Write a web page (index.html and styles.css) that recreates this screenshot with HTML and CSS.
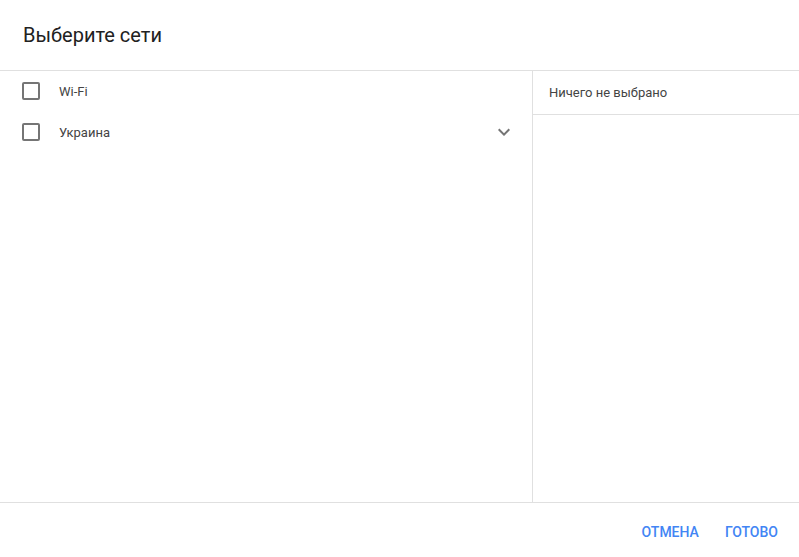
FILE: index.html
```html
<!DOCTYPE html>
<html lang="ru">
<head>
  <meta charset="UTF-8" />
  <title>Выберите сети</title>
  <link rel="stylesheet" href="styles.css">
</head>
<body>
  <div class="dialog">
    <header class="dialog-title">Выберите сети</header>
    <div class="dialog-body">
      <div class="tree">
        <label class="tree-row">
          <span class="check"></span>
          <span class="row-label">Wi-Fi</span>
        </label>
        <label class="tree-row">
          <span class="check"></span>
          <span class="row-label">Украина</span>
          <svg class="chevron" width="24" height="24" viewBox="0 0 24 24">
            <path d="M7.41 8.59L12 13.17l4.59-4.58L18 10l-6 6-6-6 1.41-1.41z" fill="#757575"/>
          </svg>
        </label>
      </div>
      <div class="selected">
        <div class="selected-head">Ничего не выбрано</div>
      </div>
    </div>
    <footer class="dialog-actions">
      <button class="btn">Отмена</button>
      <button class="btn">Готово</button>
    </footer>
  </div>
</body>
</html>
```

FILE: styles.css
```css
body {
  margin: 0;
  font-family: Roboto, "Liberation Sans", sans-serif;
  background-color: #fff;
  color: #212121;
}
.dialog {
  display: flex;
  flex-direction: column;
  height: 557px;
}
.dialog-title {
  height: 70px;
  padding: 0 23px;
  display: flex;
  align-items: center;
  font-size: 20px;
  border-bottom: 1px solid #e0e0e0;
}
.dialog-body {
  flex: 1;
  display: flex;
  border-bottom: 1px solid #e0e0e0;
}
.tree {
  width: 532px;
  border-right: 1px solid #e0e0e0;
}
.tree-row {
  height: 40px;
  display: flex;
  align-items: center;
  padding: 0 20px 1px 22px;
  font-size: 13px;
  color: #444;
}
.check {
  width: 14px;
  height: 14px;
  border: 2px solid #757575;
  border-radius: 2px;
  margin-right: 19px;
}
.row-label {
  flex: 1;
}
.chevron {
  margin-right: -4px;
}
.selected {
  flex: 1;
}
.selected-head {
  height: 43px;
  padding: 0 16px;
  display: flex;
  align-items: center;
  font-size: 13px;
  color: #444;
  border-bottom: 1px solid #e0e0e0;
}
.dialog-actions {
  height: 54px;
  display: flex;
  justify-content: flex-end;
  align-items: center;
  gap: 10px;
  padding: 4px 13px 0 0;
  box-sizing: border-box;
}
.btn {
  background: none;
  border: none;
  padding: 0 8px;
  height: 36px;
  font-family: Roboto, "Liberation Sans", sans-serif;
  font-size: 14px;
  font-weight: 500;
  text-transform: uppercase;
  color: #4285f4;
  cursor: pointer;
}
```
